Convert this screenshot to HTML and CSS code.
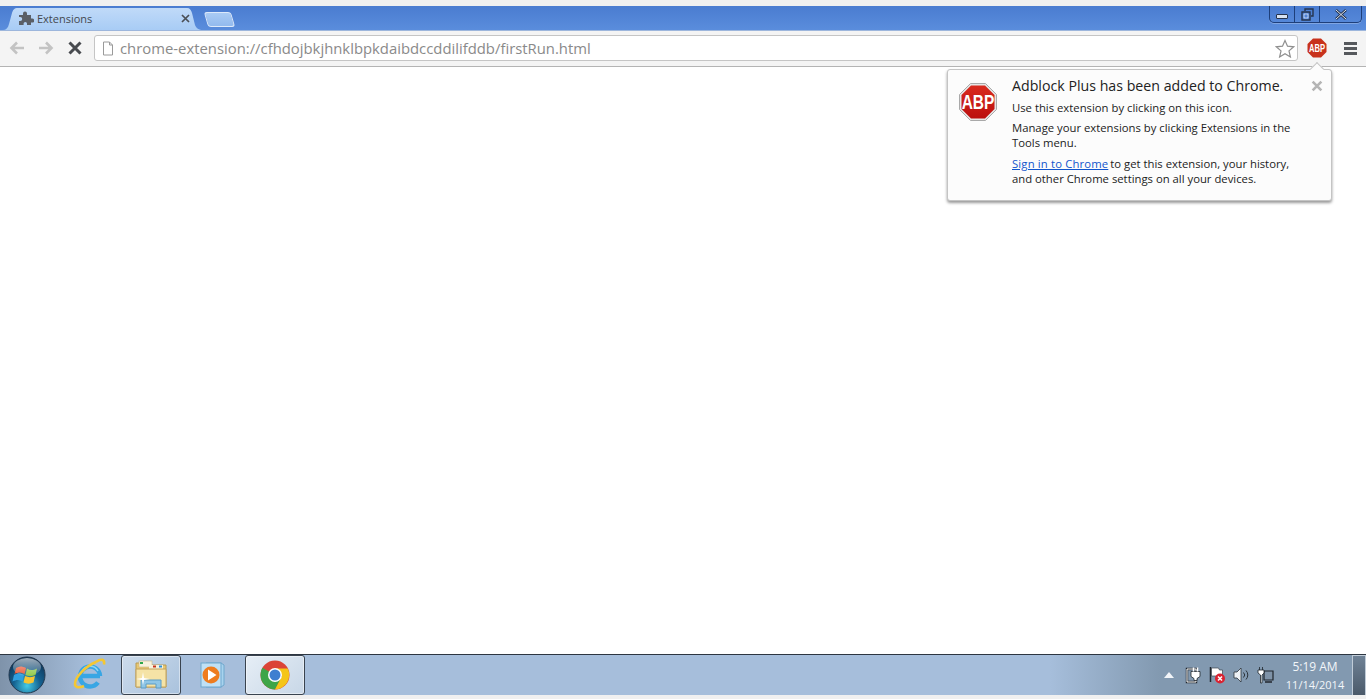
FILE: index.html
```html
<!DOCTYPE html>
<html lang="en">
<head>
    <meta charset="UTF-8">
    <title>Extensions</title>
    <link rel="stylesheet" href="styles.css">
</head>
<body>
    <div class="top-strip"></div>

    <div class="titlebar">
        <div class="tab">
            <svg class="tab-icon" width="16" height="16" viewBox="0 0 16 16"><path fill="#5a5f66" d="M1 5h4V3.500a2 2 0 0 1 4 0V5h4v3.600h1.200a2 2 0 0 1 0 4H13V15H9v-1.400a1.700 1.700 0 0 0-3.400 0V15H1v-4h1.200a2 2 0 0 0 0-4H1z"/></svg>
            <span class="tab-title">Extensions</span>
            <svg class="tab-close" width="9" height="9" viewBox="0 0 9 9"><path d="M1 1l7 7M8 1L1 8" stroke="#4a4f55" stroke-width="1.700"/></svg>
        </div>
        <div class="new-tab"></div>
        <div class="window-controls">
            <div class="win-btn win-min"><span class="min-bar"></span></div>
            <div class="win-btn win-max">
                <svg width="13" height="13" viewBox="0 0 13 13"><path fill="none" stroke="#26344d" stroke-width="1.400" d="M4 3V1h8v7h-2M1 4h8v8H1z"/><path fill="none" stroke="#fff" stroke-width=".6" d="M3 6h4v4H3z"/></svg>
            </div>
            <div class="win-btn win-close">
                <svg width="14" height="11" viewBox="0 0 14 11"><path d="M2 1l10 9M12 1L2 10" stroke="#26344d" stroke-width="2.600"/><path d="M2 1l10 9M12 1L2 10" stroke="#dfe7f3" stroke-width="1"/></svg>
            </div>
        </div>
    </div>

    <div class="toolbar">
        <svg class="nav-icon" width="18" height="16" viewBox="0 0 18 16"><path d="M16 8H4M9 2.500L3.500 8 9 13.500" fill="none" stroke="#c3c3c3" stroke-width="2.600"/></svg>
        <svg class="nav-icon" width="18" height="16" viewBox="0 0 18 16"><path d="M2 8h12M9 2.500L14.500 8 9 13.500" fill="none" stroke="#c3c3c3" stroke-width="2.600"/></svg>
        <svg class="nav-icon stop-icon" width="16" height="16" viewBox="0 0 16 16"><path d="M2.500 2.500l11 11M13.500 2.500l-11 11" stroke="#474a4f" stroke-width="3"/></svg>
        <div class="omnibox">
            <svg class="page-icon" width="12" height="15" viewBox="0 0 12 15"><path d="M1.500 1h6l3 3v10h-9z" fill="#fff" stroke="#9a9a9a"/><path d="M7.500 1v3h3" fill="none" stroke="#9a9a9a"/></svg>
            <span class="url">chrome-extension://cfhdojbkjhnklbpkdaibdccddilifddb/firstRun.html</span>
            <svg class="star" width="20" height="19" viewBox="0 0 20 19"><path d="M10 1.500l2.500 5.700 6.200.6-4.700 4.100 1.400 6.100L10 14.800 4.600 18l1.400-6.100L1.300 7.800l6.200-.6z" fill="#fff" stroke="#8f8f8f" stroke-width="1.200"/></svg>
        </div>
        <svg class="abp-small" width="20" height="20" viewBox="0 0 20 20">
            <path d="M6 .5h8L19.500 6v8L14 19.500H6L.5 14V6z" fill="#c8321c"/>
            <g transform="translate(10 14) scale(1 1.400)"><text text-anchor="middle" class="abp-small-text">ABP</text></g>
        </svg>
        <div class="menu-btn"><span></span><span></span><span></span></div>
    </div>

    <div class="content"></div>

    <div class="taskbar">
        <div class="start-orb">
            <svg width="38" height="38" viewBox="0 0 38 38">
                <defs>
                    <radialGradient id="orb" cx="50%" cy="80%" r="75%"><stop offset="0" stop-color="#45cbe6"/><stop offset=".5" stop-color="#14608f"/><stop offset="1" stop-color="#0e3558"/></radialGradient>
                    <linearGradient id="gloss" x1="0" y1="0" x2="0" y2="1"><stop offset="0" stop-color="#fff" stop-opacity=".6"/><stop offset="1" stop-color="#fff" stop-opacity=".08"/></linearGradient>
                </defs>
                <circle cx="19" cy="19" r="18" fill="url(#orb)" stroke="#23384e"/>
                <path d="M8 12c3-2 6-2 10 0l-1.500 6c-3-2-6-2-10 0z" fill="#e8502c"/>
                <path d="M19 12.500c3 2 6 2 10 0L27.500 19c-3 1.500-7 1.500-10 0z" fill="#8cc63f"/>
                <path d="M6 19c4-2 6-2 10 0l-1.500 6.500c-3-2-6-2-10 0z" fill="#2f9fe0"/>
                <path d="M17 20c3 1.500 7 1.500 10 0l-1.500 6.500c-3 1.500-7 1.500-10 0z" fill="#f7c531"/>
                <ellipse cx="19" cy="11" rx="14" ry="9" fill="url(#gloss)"/>
            </svg>
        </div>
        <div class="task-btn">
            <svg width="34" height="36" viewBox="0 0 34 36">
                <path d="M8.500 19h19.500M28 19A10 10 0 1 0 26 25.500" fill="none" stroke="#38a6e4" stroke-width="4.500"/>
                <path d="M10 14.500A9 9 0 0 1 26 14" fill="none" stroke="#8fd6f5" stroke-width="1.500"/>
                <path d="M24 5C29 1.500 33 2 32 7.500M24 5C14 9 3 20 3 27 3 31 8 31 12 29" fill="none" stroke="#f4c733" stroke-width="2.600"/>
            </svg>
        </div>
        <div class="task-btn task-open">
            <svg width="34" height="32" viewBox="0 0 34 32">
                <path d="M2 4h11l2 2h17v22H2z" fill="#e7c873" stroke="#b99a52"/>
                <rect x="5" y="2" width="13" height="6" fill="#f7f2dd" stroke="#c9b684" stroke-width=".6"/>
                <rect x="6" y="3" width="3" height="2" fill="#2da84a"/>
                <rect x="15" y="6" width="14" height="5" fill="#f7f2dd"/>
                <rect x="19" y="6.500" width="3" height="2" fill="#c8321c"/>
                <rect x="25" y="6.500" width="3" height="2" fill="#2a8fd8"/>
                <path d="M2 10h30v18H2z" fill="#f5e3a6" stroke="#c2a35e"/>
                <path d="M7 21h20v8h-5v-4H12v4H7z" fill="#8fc6e6" stroke="#5b9cc6"/>
                <path d="M9 13l1 6 6 1-6 1-1 5-1-5-6-1 6-1z" fill="#fff"/>
            </svg>
        </div>
        <div class="task-btn">
            <svg width="30" height="30" viewBox="0 0 30 30">
                <path d="M8 3h15l3 2v20l-3 2H8z" fill="#a8d3ee" stroke="#6fa7cd"/>
                <rect x="3" y="3" width="20" height="24" fill="#bfe0f5" stroke="#6fa7cd"/>
                <circle cx="13" cy="15" r="8.500" fill="#ee7c1e"/>
                <path d="M10 9.500l8.500 5.500-8.500 5.500z" fill="#fff"/>
            </svg>
        </div>
        <div class="task-btn task-open task-active">
            <svg width="30" height="30" viewBox="0 0 30 30">
                <circle cx="15" cy="15" r="14.500" fill="#db4437"/>
                <path d="M15 15L2.400 7.800A14.500 14.500 0 0 0 15 29.500l7-13z" fill="#3ea548"/>
                <path d="M15 8.500h12.700A14.500 14.500 0 0 1 15 29.500L22 16z" fill="#f5c518"/>
                <circle cx="15" cy="15" r="7" fill="#fff"/>
                <circle cx="15" cy="15" r="5.500" fill="#3f7fd0"/>
            </svg>
        </div>

        <div class="tray">
            <svg class="tray-arrow" width="10" height="6" viewBox="0 0 10 6"><path d="M5 0l5 6H0z" fill="#f2f5f9"/></svg>
            <svg width="16" height="18" viewBox="0 0 16 18">
                <path d="M2 3h9v13H2z" fill="none" stroke="#20262c" stroke-width="2.400"/>
                <path d="M2 3h9v13H2z" fill="none" stroke="#fff" stroke-width="1"/>
                <path d="M6 5.500h9v5l-3 2v2H9v-2l-3-2z" fill="#fff" stroke="#20262c" stroke-width=".8"/>
                <path d="M8.500 1.500v4M12.500 1.500v4" stroke="#fff" stroke-width="1.500"/>
            </svg>
            <svg width="18" height="18" viewBox="0 0 18 18"><path d="M2.500 1v15" stroke="#20262c" stroke-width="1.500"/><path d="M3.500 2h7l1 2h3v6h-11z" fill="#fff" stroke="#3b434b" stroke-width=".7"/><circle cx="12" cy="12.500" r="5" fill="#d92231"/><path d="M10 10.500l4 4M14 10.500l-4 4" stroke="#fff" stroke-width="1.500"/></svg>
            <svg width="17" height="16" viewBox="0 0 17 16"><path d="M1 5h3l4-4v14l-4-4H1z" fill="#eef2f6" stroke="#2b323a" stroke-width=".8"/><path d="M10.500 5.500a3.500 3.500 0 0 1 0 5M13 3.500a6.500 6.500 0 0 1 0 9" fill="none" stroke="#2b323a"/></svg>
            <svg width="17" height="18" viewBox="0 0 17 18">
                <path d="M7 5h9v9H7z" fill="#7f93a8" stroke="#20262c" stroke-width="1.200"/>
                <path d="M8 16h7" stroke="#20262c" stroke-width="1.500"/>
                <path d="M2.500 1v3M5.500 1v3M1 4h6v3L5 9v8H3.500V9L1 7z" fill="#fff" stroke="#20262c" stroke-width=".8"/>
            </svg>
        </div>
        <div class="clock">
            <div>5:19 AM</div>
            <div class="clock-date">11/14/2014</div>
        </div>
        <div class="show-desktop"></div>
    </div>
    <div class="bottom-strip"></div>

    <div class="bubble">
        <span class="bubble-arrow"></span>
        <svg class="abp-big" width="38" height="38" viewBox="0 0 38 38">
            <defs>
                <linearGradient id="abp-red" x1="0" y1="0" x2="0" y2="1"><stop offset="0" stop-color="#d92a1e"/><stop offset="1" stop-color="#bb0f0f"/></linearGradient>
            </defs>
            <path d="M11.500 .5h15L37.500 11.500v15L26.500 37.500h-15L.5 26.500v-15z" fill="#e6e6e6" stroke="#a9a9a9"/>
            <path d="M12 2.500h14L35.500 12v14L26 35.500H12L2.500 26V12z" fill="url(#abp-red)"/>
            <g transform="translate(19 26) scale(1 1.300)"><text text-anchor="middle" class="abp-big-text">ABP</text></g>
        </svg>
        <div class="bubble-text">
            <div class="bubble-title">Adblock Plus has been added to Chrome.</div>
            <p class="bubble-first">Use this extension by clicking on this icon.</p>
            <p>Manage your extensions by clicking Extensions in the Tools menu.</p>
            <p><a href="#">Sign in to Chrome</a><span>to get this extension, your history,</span><br>and other Chrome settings on all your devices.</p>
        </div>
        <svg class="bubble-close" width="12" height="12" viewBox="0 0 11 11"><path d="M1.500 1.500l8 8M9.500 1.500l-8 8" stroke="#b5b5b5" stroke-width="2.400"/></svg>
    </div>
</body>
</html>
```

FILE: styles.css
```css
* {
    box-sizing: border-box;
}

body {
    margin: 0;
    height: 699px;
    overflow: hidden;
    display: flex;
    flex-direction: column;
    font-family: "Open Sans", "Noto Sans", sans-serif;
    background: #fff;
}

.top-strip {
    height: 6px;
    background: #f0f0f0;
}

/* title bar */
.titlebar {
    height: 24px;
    display: flex;
    align-items: flex-end;
    padding-left: 3px;
    background: linear-gradient(to bottom, #4a7cd0, #5a8ddc);
    position: relative;
}

.tab {
    width: 200px;
    height: 22px;
    display: flex;
    align-items: center;
    padding: 0 13px 2px 15px;
    background: linear-gradient(to bottom, #c0daf8, #a8ccf5);
    clip-path: path("M0 22 C3 22 5 20 6 16 L9 5 C10 2 11 0 15 0 H184 C187 0 188 2 189 5 L192 17 C193 20 196 22 200 22 Z");
}

.tab-icon {
    flex: none;
    margin-right: 3px;
}

.tab-title {
    flex: 1;
    font-size: 11px;
    color: #44484e;
}

.tab-close {
    flex: none;
}

.new-tab {
    width: 27px;
    height: 15px;
    margin: 0 0 3px 3px;
    background: linear-gradient(to bottom, #a9cbf4, #92baee);
    border: 1px solid #dce9fa;
    border-radius: 3px;
    transform: skewX(16deg);
}

.window-controls {
    display: flex;
    position: absolute;
    top: 0;
    right: 4px;
    height: 17px;
    border: 1px solid #1e3f7a;
    border-top: 0;
    border-radius: 0 0 5px 5px;
    box-shadow: 0 1px 0 rgba(255, 255, 255, 0.25);
}

.win-btn {
    display: flex;
    align-items: center;
    justify-content: center;
}

.win-min {
    width: 25px;
    border-right: 1px solid #1e3f7a;
}

.min-bar {
    width: 12px;
    height: 5px;
    margin-top: 5px;
    background: #d8e3f2;
    border: 1px solid #26344d;
    border-radius: 1px;
}

.win-max {
    width: 25px;
    border-right: 1px solid #1e3f7a;
}

.win-close {
    width: 41px;
}

/* toolbar */
.toolbar {
    height: 37px;
    display: flex;
    align-items: center;
    padding: 0 9px 1px 8px;
    background: #f4f4f4;
    border-top: 1px solid #9db6dc;
    border-bottom: 1px solid #b4b4b4;
}

.nav-icon {
    flex: none;
    margin-right: 11px;
}

.stop-icon {
    margin: 0 11px 0 1px;
}

.omnibox {
    width: 1204px;
    height: 26px;
    display: flex;
    align-items: center;
    padding: 0 2px 0 7px;
    background: #fff;
    border: 1px solid #c5c5c5;
    border-radius: 3px;
}

.page-icon {
    flex: none;
    margin-right: 6px;
}

.url {
    flex: 1;
    font-size: 14.85px;
    color: #8a8a8a;
    white-space: nowrap;
}

.star {
    flex: none;
}

.abp-small {
    flex: none;
    margin-left: 9px;
}

.abp-small-text {
    font-family: "Liberation Sans", sans-serif;
    font-size: 7.6px;
    font-weight: bold;
    fill: #fff;
}

.menu-btn {
    display: flex;
    flex-direction: column;
    gap: 2px;
    margin-left: 17px;
}

.menu-btn span {
    width: 13px;
    height: 3px;
    background: #55585c;
}

.content {
    flex: 1;
    background: #fff;
}

/* taskbar */
.taskbar {
    height: 41px;
    display: flex;
    align-items: stretch;
    background: linear-gradient(to right, #7f93aa 0, #a6bedb 90px, #a6bedb 1050px, #8299b0 1160px, #8299b0 100%);
    border-top: 1px solid #2d3641;
}

.start-orb {
    width: 57px;
    padding: 1px 0 0 8px;
}

.task-btn {
    width: 64px;
    display: flex;
    align-items: center;
    justify-content: center;
}

.task-open {
    width: 60px;
    background: linear-gradient(135deg, #ccdbeb, #a9c2dd);
    border: 1px solid #39434f;
    border-radius: 3px;
    box-shadow: inset 0 0 0 1px rgba(255, 255, 255, 0.45);
}

.task-active {
    background: linear-gradient(135deg, #e6eef6, #c8d7e7);
}

.tray {
    margin-left: auto;
    margin-right: 4px;
    display: flex;
    align-items: center;
    gap: 7px;
}

.tray-arrow {
    margin-right: 4px;
}

.clock {
    width: 74px;
    padding-top: 3px;
    text-align: center;
    font-size: 12px;
    line-height: 18px;
    color: #f2f6fa;
}

.clock-date {
    font-size: 11px;
}

.show-desktop {
    width: 14px;
    background: linear-gradient(to bottom, #6f8296, #4b5a6a);
    border: 1px solid #c0ccd8;
    border-bottom: 0;
}

.bottom-strip {
    height: 4px;
    background: #f0f0f0;
}

/* extension bubble */
.bubble {
    position: absolute;
    top: 69px;
    left: 947px;
    width: 385px;
    height: 132px;
    display: flex;
    padding: 7px 0 0 11px;
    background: #fcfcfc;
    border: 1px solid #c4c4c4;
    border-radius: 3px;
    box-shadow: 0 2px 3px rgba(0, 0, 0, 0.4);
}

.bubble-arrow {
    position: absolute;
    top: -6px;
    right: 9px;
    width: 10px;
    height: 10px;
    background: #fcfcfc;
    border: 1px solid #c4c4c4;
    border-right: 0;
    border-bottom: 0;
    transform: rotate(45deg);
}

.abp-big {
    flex: none;
    margin: 6px 15px 0 0;
}

.abp-big-text {
    font-family: "Liberation Sans", sans-serif;
    font-size: 15.5px;
    font-weight: bold;
    fill: #fff;
}

.bubble-text {
    width: 290px;
    font-size: 11.3px;
    line-height: 15px;
    color: #222;
}

.bubble-title {
    font-size: 14.2px;
    line-height: 17px;
    margin-bottom: 5px;
}

.bubble-text p {
    margin: 0 0 6px;
}

.bubble-text .bubble-first {
    padding-top: 1px;
    margin-bottom: 5px;
}

.bubble-text a {
    color: #1155cc;
    letter-spacing: 0.15px;
    margin-right: 2px;
}

.bubble-close {
    position: absolute;
    top: 10px;
    right: 8px;
}
```
